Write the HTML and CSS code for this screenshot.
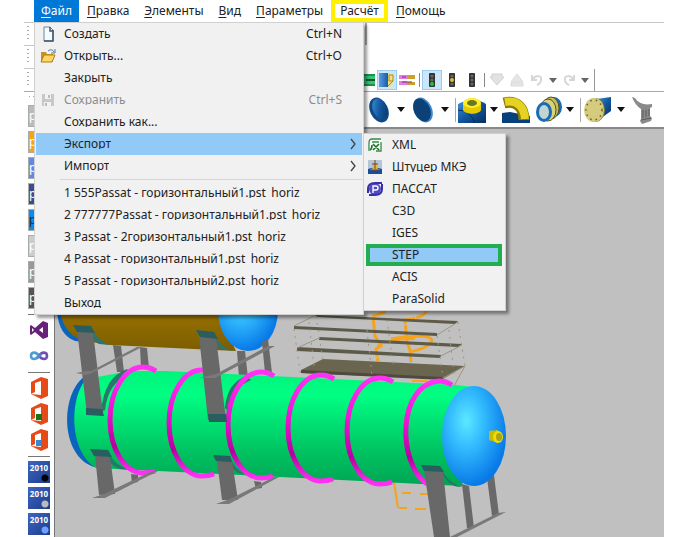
FILE: index.html
```
<!DOCTYPE html>
<html lang="ru">
<head>
<meta charset="utf-8">
<title>Пассат</title>
<link rel="stylesheet" href="styles.css">
</head>
<body>
<svg class="defs" aria-hidden="true">
  <defs>
    <linearGradient id="blueIcon" x1="0" y1="0" x2="1" y2="1"><stop offset="0" stop-color="#3f97df"/><stop offset=".5" stop-color="#12569d"/><stop offset="1" stop-color="#06305f"/></linearGradient>
    <linearGradient id="book" x1="0" y1="0" x2="1" y2="0"><stop offset="0" stop-color="#5b9ce0"/><stop offset="1" stop-color="#1b59a8"/></linearGradient>
    <symbol id="caret" viewBox="0 0 8 5"><path d="M0 0h8L4 5z" fill="currentColor"/></symbol>
    <symbol id="light" viewBox="0 0 16 16"><rect x="5" y="1" width="6" height="14" rx="1" fill="#333"/><circle cx="8" cy="4" r="1.6" fill="#666"/><circle cx="8" cy="8" r="1.6" fill="#666"/><circle cx="8" cy="12" r="1.6" fill="#666"/></symbol>
    <symbol id="office" viewBox="0 0 20 22"><path d="M2 5 12 0l7 2v17l-7 3L2 17l10 1V4L6 6v9l-4 2z" fill="#e64a19"/></symbol>
    <symbol id="chevron" viewBox="0 0 6 12"><path d="M1 1l4 5-4 5" fill="none" stroke="#444" stroke-width="1.3"/></symbol>
  </defs>
</svg>
<div class="window">
  <nav class="menubar" aria-label="Меню">
    <button class="top active"><u>Ф</u>айл</button>
    <button class="top"><u>П</u>равка</button>
    <button class="top"><u>Э</u>лементы</button>
    <button class="top"><u>В</u>ид</button>
    <button class="top"><u>П</u>араметры</button>
    <button class="top marked">Расчёт</button>
    <button class="top"><u>П</u>омощь</button>
  </nav>
  <div class="strip"><i class="grip"></i><i class="edge"></i></div>
  <div class="strip"><i class="grip"></i></div>
  <div class="strip tools">
    <i class="grip"></i>
    <div class="group">
      <button class="tool" aria-label="Сечение"><svg viewBox="0 0 16 16"><path d="M0 2h16v12H0z" fill="#18934e"/><path d="M5 4h11v8H5z" fill="#37c274"/><path d="M7 7h9v2H7z" fill="#0b5a2c"/></svg></button>
      <button class="tool on" aria-label="Изоляция"><svg viewBox="0 0 16 16"><path d="M0 1h9v14H0z" fill="url(#book)"/><path d="M9 1h6v9l-4 5H9z" fill="#efe18b"/><path d="M10 3h4v6h-4zM14 9l-5 5" fill="none" stroke="#a88d1d"/></svg></button>
      <button class="tool" aria-label="Футеровка"><svg viewBox="0 0 16 16"><path d="M0 3h8v10H0z" fill="#e97bdd"/><path d="M8 3h8v4H8zM8 10h8v3H8z" fill="#caa12c"/><path d="M0 7h16v2H0z" fill="#fff"/><path d="M3 10h10M3 5h4" stroke="#773088"/></svg></button>
      <i class="sep thin"></i>
      <button class="tool on" aria-label="Зелёный"><svg viewBox="0 0 16 16"><use href="#light"/><circle cx="8" cy="12" r="2" fill="#18c832"/></svg></button>
      <button class="tool" aria-label="Жёлтый"><svg viewBox="0 0 16 16"><use href="#light"/><circle cx="8" cy="8" r="2" fill="#e5b92c"/></svg></button>
      <button class="tool" aria-label="Выключен"><svg viewBox="0 0 16 16"><use href="#light"/></svg></button>
      <i class="sep thin"></i>
      <button class="tool" aria-label="Вниз"><svg viewBox="0 0 16 16"><path d="M3 2h10v3h2l-7 8-7-8h2z" fill="#e2e2e2" stroke="#d0d0d0"/></svg></button>
      <button class="tool" aria-label="Вверх"><svg viewBox="0 0 16 16"><path d="M8 2l6 8H2zM2 11h12v3H2z" fill="#e6e6e6" stroke="#dadada"/></svg></button>
      <button class="tool" aria-label="Отменить"><svg viewBox="0 0 16 16"><path d="M3 3v5h5M4 7c3-4 9-4 8 1 0 2-2 4-4 5" fill="none" stroke="#d6d6d6" stroke-width="2"/></svg></button>
      <button class="drop grey" aria-label="Список отмены"><svg><use href="#caret"/></svg></button>
      <button class="tool" aria-label="Вернуть"><svg viewBox="0 0 16 16"><path d="M13 3v5H8M12 7C9 3 3 3 4 8c0 2 2 4 4 5" fill="none" stroke="#d6d6d6" stroke-width="2"/></svg></button>
      <button class="drop grey" aria-label="Список возврата"><svg><use href="#caret"/></svg></button>
    </div>
  </div>
  <div class="main">
    <aside class="sidebar">
      <i class="dots"></i>
      <button class="side tile silver">p</button>
      <button class="side tile amber">p</button>
      <button class="side tile sky">p</button>
      <button class="side tile navy">p</button>
      <button class="side tile azure">p</button>
      <button class="side tile light">p</button>
      <button class="side tile mid">p</button>
      <button class="side tile dark">p</button>
      <hr>
      <button class="side" aria-label="Visual Studio"><svg viewBox="0 0 20 20"><path d="M14 1l5 2v14l-5 2-8-7-4 3-1-1V6l1-1 4 3zM3 8v4l2-2zm11-1-4 3 4 3z" fill="#68217a" fill-rule="evenodd"/></svg></button>
      <button class="side" aria-label="Azure DevOps"><svg viewBox="0 0 20 20" fill="none" stroke-width="2.6"><path d="M10 10C7 5 2 6 2 10s5 4 8 0" stroke="#4a9ed8"/><path d="M10 10c3-5 8-4 8 0s-5 4-8 0" stroke="#7050b4"/><path d="M8 12l4-4" stroke="#5d84cf"/></svg></button>
      <hr>
      <button class="side" aria-label="Office"><svg viewBox="0 0 20 22"><use href="#office"/></svg></button>
      <button class="side" aria-label="Office Excel"><svg viewBox="0 0 20 22"><use href="#office"/><path d="M7 11h6v6H7z" fill="#18751c"/></svg></button>
      <button class="side" aria-label="Office Word"><svg viewBox="0 0 20 22"><use href="#office"/><path d="M7 11h6v6H7z" fill="#3389d2"/></svg></button>
      <hr>
      <button class="side year black">2010</button>
      <button class="side year ash">2010</button>
      <button class="side year blue">2010</button>
    </aside>
    <main class="work">
      <div class="shapes">
        <button class="shape" aria-label="Днище"><svg viewBox="0 0 28 28"><ellipse cx="14" cy="14" rx="9" ry="13" transform="rotate(-25 14 14)" fill="#0f4a87"/><ellipse cx="15" cy="13" rx="7" ry="11" transform="rotate(-25 15 13)" fill="url(#blueIcon)"/></svg></button>
        <button class="drop" aria-label="Днища"><svg><use href="#caret"/></svg></button>
        <button class="shape" aria-label="Крышка"><svg viewBox="0 0 28 28"><ellipse cx="14" cy="14" rx="9" ry="13" transform="rotate(-25 14 14)" fill="#3a88ce"/><ellipse cx="13" cy="14" rx="8" ry="12" transform="rotate(-25 13 14)" fill="#0c4178"/></svg></button>
        <button class="drop" aria-label="Крышки"><svg><use href="#caret"/></svg></button>
        <i class="sep"></i>
        <button class="shape" aria-label="Штуцер"><svg viewBox="0 0 28 28"><path d="M0 8q16-8 28 0v19H0z" fill="url(#blueIcon)"/><path d="M0 14q12 0 17 13" stroke="#062d59" fill="none"/><path d="M5 7v7c2 5 16 5 18 0V7z" fill="#e2c900"/><ellipse cx="14" cy="7" rx="9" ry="5" fill="#ffed25"/><ellipse cx="14" cy="7" rx="5" ry="3" fill="#6b7624"/></svg></button>
        <button class="drop" aria-label="Штуцеры"><svg><use href="#caret"/></svg></button>
        <button class="shape" aria-label="Отвод"><svg viewBox="0 0 28 28"><path d="M0 17l8-1 20 4v7H0z" fill="#07417b"/><path d="M2 7C14 4 22 11 22 24" stroke="#8c7a00" stroke-width="11" fill="none"/><path d="M3 6C15 4 22 10 23 23" stroke="#e5d221" stroke-width="8" fill="none"/></svg></button>
        <button class="shape gap" aria-label="Компенсатор"><svg viewBox="0 0 28 28"><ellipse cx="20" cy="11" rx="8" ry="10" fill="#176bb7"/><ellipse cx="17" cy="12" rx="8" ry="11" fill="#c6bf61" stroke="#54501d"/><ellipse cx="14" cy="14" rx="8" ry="11" fill="#d9d27a" stroke="#54501d"/><ellipse cx="10" cy="16" rx="8" ry="10" fill="#176bb7"/><ellipse cx="10" cy="16" rx="5" ry="7" fill="#c3d5d0"/></svg></button>
        <button class="drop" aria-label="Компенсаторы"><svg><use href="#caret"/></svg></button>
        <i class="sep"></i>
        <button class="shape wide" aria-label="Фланец"><svg viewBox="0 0 28 28"><path d="M13 3 28 1v14l-11 8z" fill="url(#blueIcon)"/><ellipse cx="12" cy="14" rx="10" ry="12" fill="#88803a"/><ellipse cx="11" cy="14" rx="10" ry="12" fill="#d5cb7d"/><ellipse cx="11" cy="14" rx="8" ry="10" fill="none" stroke="#675e24" stroke-width="1.5" stroke-dasharray="1.5 4"/></svg></button>
        <button class="drop" aria-label="Фланцы"><svg><use href="#caret"/></svg></button>
        <button class="shape" aria-label="Опора"><svg viewBox="0 0 28 28"><path d="M3 1l3 1q5 8 17 6v3l-2 1v8l2 2-1 3-9 3-2-3 1-2V13Q6 9 3 1z" fill="#8a8a8a"/><path d="M14 14v8M17 14v7M20 13v7M12 24l10-2" stroke="#5a5a5a"/></svg></button>
      </div>
      <div class="canvas">
        <svg class="scene" width="609" height="410" viewBox="55 127 609 410" role="img" aria-label="Модель аппарата">
          <defs>
            <linearGradient id="green" gradientUnits="userSpaceOnUse" x1="0" y1="365" x2="0" y2="485"><stop offset="0" stop-color="#00f078"/><stop offset=".25" stop-color="#00ff83"/><stop offset=".7" stop-color="#00c563"/><stop offset="1" stop-color="#00a653"/></linearGradient>
            <linearGradient id="gold" x1="0" y1="0" x2="0" y2="1"><stop offset="0" stop-color="#967000"/><stop offset="1" stop-color="#7d5d00"/></linearGradient>
            <linearGradient id="ringTone" x1="0" y1="0" x2="0" y2="1"><stop offset="0" stop-color="#ff31f4"/><stop offset=".35" stop-color="#ee18d8"/><stop offset=".75" stop-color="#b600a0"/><stop offset="1" stop-color="#ff31f4"/></linearGradient>
            <radialGradient id="head" cx=".38" cy=".35" r=".65"><stop offset="0" stop-color="#5ce9ff"/><stop offset=".4" stop-color="#34bdff"/><stop offset="1" stop-color="#087ae8"/></radialGradient>
            <path id="ring" d="M156 371Q150 367 143 367A33 53 0 0 0 143 473Q150 473 155 471" fill="none" stroke="url(#ringTone)" stroke-width="5"/>
          </defs>
          <g fill="none" stroke="#f5a31b" stroke-width="3">
            <path d="M386 312l-13 4 2 20 6 10-5 3 2 12M427 310q-3 8-22 10l2 22 3 8 1 12" stroke-dasharray="14 1"/>
            <path d="M391 339q38-6 41 1-2 8-23 12"/><path d="M377 346q14-8 38-7M412 381h15" stroke-width="2"/>
            <path d="M394 482l4 26M399 508h8M415 509h11M402 493h9M420 494h9" stroke-width="2"/>
          </g>
          <g fill="#5d5a4a">
            <path d="M316 315l142 6-3 3-138-7zM294 326l143 7v3l-143-7zM319 337l143 7-4 3-139-7zM297 347l144 8-1 3-143-7z"/>
            <path d="M301 370l22-11 142 7-22 13-142-6z" fill="#69654f"/><path d="M301 370l142 7v3l-142-7z" fill="#4d4a3f"/>
          </g>
          <g fill="none" stroke="#9b967e"><path d="M294 326l22-11M437 335l21-13M297 348l22-10M441 356l21-11M443 378l22-12-11 20M443 379v9"/>
            <path d="M294 329l7 50M316 316l7 45M437 336l6 42M458 322l7 44M367 330l5 46M387 320l6 44M309 322l5 44M449 330l5 44" stroke-dasharray="2 5"/></g>
          <path d="M57 312q2 23 18 29l10 1V312z" fill="#0866bd"/>
          <path d="M60 312q5 24 25 29l25 4 126 6-18-39z" fill="url(#gold)"/>
          <path d="M91 326q5 15 19 19l-11-1q-8-4-10-16zM213 332q5 14 20 19l-12-2q-7-5-9-15z" fill="#2e7470"/>
          <ellipse cx="248" cy="310" rx="30" ry="41" fill="url(#head)"/>
          <path d="M113 345l8 1 3 26h-7zM140 347l7 1 2 20h-8zM237 351h8l3 27h-9zM262 342l6-3 4 34h-7z" fill="#696969"/>
          <path d="M84 377C60 395 60 456 94 467h16V378z" fill="#0864bc"/>
          <path d="M86 379C69 399 69 452 96 468l62 3 122 6 182 9 12-99-19-2-162-8-128-6-35 0z" fill="url(#green)"/>
          <path d="M127 369q-23 8-26 43l4-2q3-28 26-37zM247 376q-20 6-22 32l4 4q2-24 22-32zM108 450q5 15 22 20l-10-1q-14-5-14-19zM230 456q4 14 16 18l-8-1q-9-5-10-17zM440 466q8 18 23 21-14 1-21-14z" fill="#26786a"/>
          <use href="#ring"/><use href="#ring" x="59" y="3"/><use href="#ring" x="118" y="5"/><use href="#ring" x="178" y="8"/><use href="#ring" x="237" y="11"/>
          <path d="M452 385Q446 381 439 381C397 385 397 463 427 484" fill="none" stroke="url(#ringTone)" stroke-width="5"/>
          <path d="M462 484l7 2 5 42h-7zM487 478l7-3 5 40-7 1z" fill="#696969"/>
          <ellipse cx="474" cy="436" rx="32" ry="50" fill="url(#head)"/>
          <path d="M489 431l9-1v13l-9-3z" fill="#c9b900"/><ellipse cx="498" cy="437" rx="5" ry="6" fill="#ece000"/><ellipse cx="499" cy="437" rx="3" ry="4" fill="#aea11c"/>
          <path d="M77 330l16 2 10 82H87zM199 336l17 1 10 83h-18zM95 455l15 2 5 37-16 1zM217 461h15l6 39h-16zM424 470l19 1 7 66h-16zM131 474l7 1v7l-6 1zM254 481l7 1 1 6-6 1z" fill="#686868"/>
          <path d="M76 373l11-2 4 0 46-24h5l-52 27-4 1zM199 378l17-4 52-28h7l-60 32zM92 498l12-4 48-23h6l-53 27zM216 504l14-5 44-22h5l-50 27zM450 537l48-24 8-1-49 25z" fill="#797979"/>
          <path d="M73 325l18 1 4 7-18-1zM86 408l16 1 2 7-18-1zM196 330l18 2 4 7-18-2zM208 414h18l1 8h-18zM90 449l18 1 4 7-18-1zM213 455l17 1 2 6-16-1zM421 465l19 1 4 6-20-1z" fill="#285e60"/>
        </svg>
      </div>
    </main>
  </div>

  <div class="menu file-menu">
    <button class="item"><svg viewBox="0 0 16 16"><path d="M4 1h6l3 3v11H4z" fill="#f4fbff" stroke="#70839a"/><path d="M10 1v4h3M13 4v11H4" fill="none" stroke="#40546b" stroke-width="1.5"/></svg><span class="text">Создать</span><kbd>Ctrl+N</kbd></button>
    <button class="item"><svg viewBox="0 0 16 16"><path d="M1 14V4h5l1 2h6v8z" fill="#c99324"/><path d="M1 14l3-7h11l-3 7z" fill="#ffd663" stroke="#b17c18"/><path d="M8 3q4-3 6 1M15 1v4h-4" fill="none" stroke="#5377a5"/></svg><span class="text">Открыть...</span><kbd>Ctrl+O</kbd></button>
    <button class="item"><span class="text">Закрыть</span></button>
    <button class="item" disabled><svg viewBox="0 0 16 16"><path d="M2 2h12v12H2z" fill="#c8c8c8"/><path d="M5 2h6v5H5zM4 10h7v4H4z" fill="#f1f1f1"/><path d="M8 3h2v3H8zM5 11h2v3H5z" fill="#bbb"/></svg><span class="text">Сохранить</span><kbd>Ctrl+S</kbd></button>
    <button class="item"><span class="text">Сохранить как...</span></button>
    <button class="item hot"><span class="text">Экспорт</span><svg class="more"><use href="#chevron"/></svg></button>
    <button class="item"><span class="text">Импорт</span><svg class="more"><use href="#chevron"/></svg></button>
    <hr>
    <button class="item"><span class="text">1 555Passat - горизонтальный1.pst_horiz</span></button>
    <button class="item"><span class="text">2 777777Passat - горизонтальный1.pst_horiz</span></button>
    <button class="item"><span class="text">3 Passat - 2горизонтальный1.pst_horiz</span></button>
    <button class="item"><span class="text">4 Passat - горизонтальный1.pst_horiz</span></button>
    <button class="item"><span class="text">5 Passat - горизонтальный2.pst_horiz</span></button>
    <button class="item"><span class="text">Выход</span></button>
  </div>
  <div class="menu export-menu">
    <button class="item"><svg viewBox="0 0 16 16"><path d="M2 2h12v12H2z" fill="#fff"/><path d="M14 2H5Q2 2 2 6v8M14 5v9H9M5 5h7" fill="none" stroke="#368b43" stroke-width="1.3"/><path d="M6 7l6 6M12 7l-6 6M3 13q2-1 2-5" fill="none" stroke="#167329" stroke-width="1.6"/></svg><span class="text">XML</span></button>
    <button class="item"><svg viewBox="0 0 16 16"><path d="M1 1h14v14H1z" fill="#b4c6d5"/><path d="M1 10q7-3 14 0v5H1z" fill="#164fa0"/><path d="M6 4h4v5l3 2H3l3-2z" fill="#e4b732"/><path d="M8 1v9M5 5h6M4 11h8" stroke="#854028"/></svg><span class="text">Штуцер МКЭ</span></button>
    <button class="item"><svg viewBox="0 0 16 16"><circle cx="8" cy="8" r="6" fill="#5048c8"/><path d="M1 12V8q0-6 7-6h7M15 3v5q0 6-7 6H2" fill="none" stroke="#3730a8" stroke-width="2"/><path d="M6 12V5h3q2 0 2 2t-2 2H6" fill="none" stroke="#fff" stroke-width="1.4"/></svg><span class="text">ПАССАТ</span></button>
    <button class="item"><span class="text">C3D</span></button>
    <button class="item"><span class="text">IGES</span></button>
    <button class="item hot framed"><span class="text">STEP</span></button>
    <button class="item"><span class="text">ACIS</span></button>
    <button class="item"><span class="text">ParaSolid</span></button>
  </div>
</div>
</body>
</html>
```
FILE: styles.css
```
* { box-sizing: border-box; }
body { margin: 0; background: #fff; color: #222; font: 12px/18px "Noto Sans", "Open Sans", sans-serif; }
button { margin: 0; padding: 0; border: 0; background: none; color: inherit; font: inherit; }
.defs { position: absolute; width: 0; height: 0; }
.window { position: relative; display: flex; flex-direction: column; height: 100vh; margin: 0 24px; overflow: hidden; }

.menubar { display: flex; flex: none; gap: 1px; height: 22px; padding-left: 10px; }
.top { padding: 0 7px; line-height: 22px; white-space: nowrap; }
.top u { text-underline-offset: 2px; }
.top.active { background: #0078d7; color: #fff; }
.top.marked { padding: 0 5px; border: 4px solid #fff000; line-height: 14px; }

.strip { display: flex; flex: none; align-items: stretch; height: 23px; border-top: 1px solid #c8c8c8; padding-left: 3px; }
.strip + .strip { border-image: linear-gradient(90deg, #c8c8c8 20px, transparent 20px) 1; }
.grip { flex: none; width: 2px; margin: 3px 0; background: repeating-linear-gradient(#aaa 0 1px, transparent 1px 4px); }
.edge { width: 2px; margin-left: 336px; background: #aaa; }
.group { display: flex; align-items: center; margin-left: 328px; padding-right: 3px; border-right: 1px solid #999; }
.tool { width: 20px; height: 20px; padding: 2px; }
.tool svg { display: block; width: 16px; height: 16px; }
.tool.on { padding: 1px; border: 1px solid #9acbf0; background: #cbe6fa; }
.drop { width: 16px; color: #111; }
.drop svg { display: block; width: 8px; height: 5px; margin: auto; }
.drop.grey { width: 12px; color: #666; }
.sep { width: 1px; height: 24px; margin: 0 2px; background: #aaa; }
.sep.thin { height: 14px; background: #888; }

.main { display: flex; flex: 1; min-height: 0; border-top: 1px solid #aaa; }
.sidebar { display: flex; flex: none; flex-direction: column; align-items: center; width: 31px; border-right: 1px solid #777; }
.dots { flex: none; width: 20px; height: 1px; margin: 4px 0 6px; background: repeating-linear-gradient(90deg, #aaa 0 1px, transparent 1px 4px); }
.side { flex: none; width: 22px; height: 22px; margin: 2px 0; }
.side svg { display: block; width: 20px; height: 22px; margin: auto; }
.sidebar hr { flex: none; width: 22px; height: 1px; margin: 3px 0 2px; border: 0; background: #777; }
.tile { color: #fff; border: 1px solid #aaa; text-align: left; }
.silver { background: #bbb; }
.amber { background: #f5a60c; }
.sky { background: #6488e8; }
.navy { background: #3a4d94; }
.azure { background: #078df0; color: #134; }
.light { background: #ccc; }
.mid { background: #999; }
.dark { background: #555; }
.year { background: radial-gradient(circle at 17px 17px, var(--dot) 3px, transparent 4px), linear-gradient(135deg, #3c66c2, #1c3c8c); color: #fff; font: bold 8px/14px "Open Sans", sans-serif; padding-bottom: 8px; }
.black { --dot: #000; }
.ash { --dot: #bbb; }
.blue { --dot: #6f9fff; }

.work { display: flex; flex: 1; flex-direction: column; min-width: 0; }
.shapes { display: flex; flex: none; align-items: center; height: 35px; padding-left: 310px; }
.shape { width: 28px; height: 28px; }
.shape svg { display: block; width: 28px; height: 28px; }
.shape.gap { margin-left: 4px; }
.shape.wide { width: 30px; }
.canvas { flex: 1; min-height: 0; overflow: hidden; background: #c0c0c0; box-shadow: inset 0 2px #888; }
.scene { display: block; }

.menu { position: absolute; padding: 1px 3px; background: #f1f1f1; border: 1px solid #d0d0d0; box-shadow: 3px 3px 3px #0006; }
.menu hr { height: 1px; margin: 2px 0 2px 24px; border: 0; background: #d5d5d5; }
.file-menu { top: 22px; left: 10px; width: 330px; padding: 0 1px; }
.export-menu { top: 133px; left: 339px; width: 143px; padding: 0 3px 0 2px; }
.item { position: relative; display: flex; align-items: flex-start; width: 100%; height: 22px; padding: 2px 20px 0 28px; text-align: left; }
.export-menu .item { padding-left: 26px; }
.item > svg { position: absolute; top: 3px; left: 4px; width: 16px; height: 16px; }
.export-menu .item > svg { left: 1px; }
/* rows are tight: descenders are trimmed just under the baseline */
.text { height: 14px; overflow: hidden; white-space: nowrap; }
.item kbd { margin-left: auto; font: inherit; }
.item:disabled { color: #8d8d8d; }
.item.hot { background: #91c9f7; }
.item > .more { top: 5px; right: 6px; left: auto; width: 6px; height: 12px; }
.item.framed { box-shadow: inset 0 0 0 4px #22ad51; }
```
